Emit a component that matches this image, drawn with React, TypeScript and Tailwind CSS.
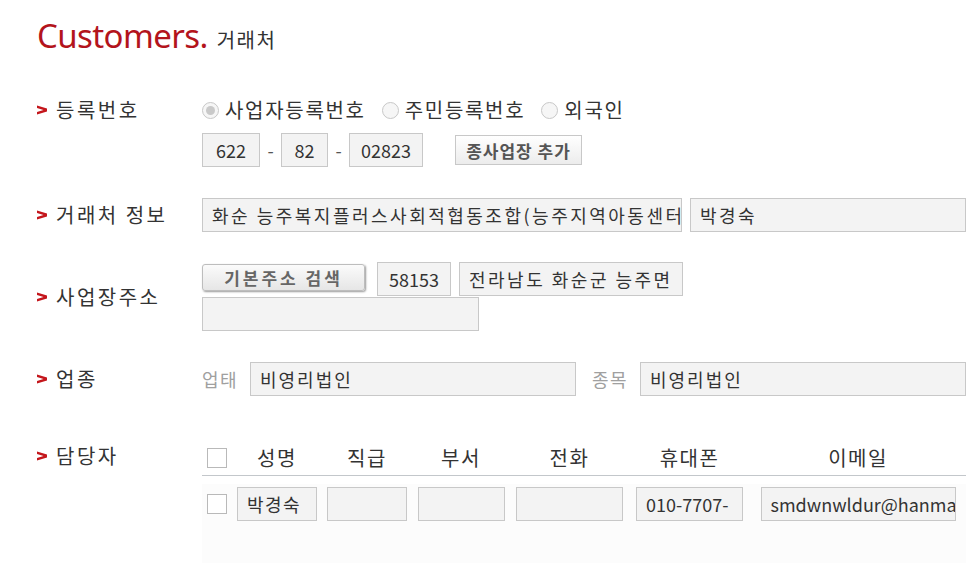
import React from 'react';

const KR = '[font-family:"Noto_Sans_CJK_KR","Noto_Sans",sans-serif]';

function Label({ text }: { text: string }) {
    return (
        <div className="w-[165px] shrink-0 flex items-center gap-[9px]">
            <svg width="10" height="10" viewBox="0 0 10 10" className="shrink-0">
                <path d="M0 0.5 L10 3.6 L10 6.4 L0 9.5 L0 7 L6.5 5 L0 3 Z" fill="#c4161c" />
            </svg>
            <span className="text-[20px] text-[#333] tracking-[2.5px] leading-[28px]">{text}</span>
        </div>
    );
}

function Field({ value = '', className = '' }: { value?: string; className?: string }) {
    return (
        <div className={`h-[34px] bg-[#f3f3f3] border border-[#c8c8c8] text-[18px] text-[#333] leading-[32px] px-[9px] overflow-hidden whitespace-nowrap ${className}`}>
            {value}
        </div>
    );
}

function Radio({ checked, label }: { checked?: boolean; label: string }) {
    return (
        <div className="flex items-center gap-[6px]">
            <span className="w-[17px] h-[17px] rounded-full border border-[#c8c8c8] bg-[#f6f6f6] flex items-center justify-center">
                {checked && <span className="w-[9px] h-[9px] rounded-full bg-[#c9c9c9]" />}
            </span>
            <span className="text-[20px] text-[#333] leading-[28px] tracking-[1.7px]">{label}</span>
        </div>
    );
}

function Check() {
    return <span className="block w-[20px] h-[20px] border border-[#b9b9b9] bg-white" />;
}

export default function App() {
    const heads = ['성명', '직급', '부서', '전화', '휴대폰', '이메일'];
    const cells = [
        { w: 'w-[80px] tracking-[1.5px]', v: '박경숙' },
        { w: 'w-[80px]', v: '' },
        { w: 'w-[87px]', v: '' },
        { w: 'w-[107px]', v: '' },
        { w: 'w-[107px]', v: '010-7707-' },
        { w: 'w-[195px] text-[16px]', v: 'smdwnwldur@hanmail.net' },
    ];

    return (
        <div className={`w-[980px] h-[563px] overflow-hidden bg-white pl-[37px] ${KR}`}>
            {/* 타이틀 */}
            <div className="flex items-baseline gap-[9px] pt-[12px] h-[96px]">
                <span className="text-[33px] text-[#b3141c] tracking-[-0.6px] [font-family:'Noto_Sans',sans-serif] leading-[48px]">Customers.</span>
                <span className="text-[20px] text-[#333] tracking-[1.5px]">거래처</span>
            </div>

            {/* 등록번호 */}
            <div className="flex items-start">
                <Label text="등록번호" />
                <div className="flex flex-col gap-[9px]">
                    <div className="flex items-center gap-[16px] h-[28px]">
                        <Radio checked label="사업자등록번호" />
                        <Radio label="주민등록번호" />
                        <Radio label="외국인" />
                    </div>
                    <div className="flex items-center">
                        <Field value="622" className="w-[58px] text-center px-0" />
                        <span className="w-[21px] text-center text-[#555] text-[18px]">-</span>
                        <Field value="82" className="w-[47px] text-center px-0" />
                        <span className="w-[21px] text-center text-[#555] text-[18px]">-</span>
                        <Field value="02823" className="w-[74px] text-center px-0" />
                        <button className="ml-[32px] w-[127px] h-[30px] border border-[#c8c8c8] bg-gradient-to-b from-white to-[#ececec] text-[17px] font-bold text-[#555] tracking-[1px] leading-none">
                            종사업장 추가
                        </button>
                    </div>
                </div>
            </div>

            {/* 거래처 정보 */}
            <div className="flex items-center mt-[31px]">
                <Label text="거래처 정보" />
                <div className="flex gap-[8px]">
                    <Field value="화순 능주복지플러스사회적협동조합(능주지역아동센터)" className="w-[480px] tracking-[2.5px]" />
                    <Field value="박경숙" className="w-[276px] tracking-[2.5px]" />
                </div>
            </div>

            {/* 사업장주소 */}
            <div className="flex items-center mt-[30px]">
                <Label text="사업장주소" />
                <div className="flex flex-col gap-px">
                    <div className="flex items-start">
                        <button className="mt-[2px] w-[163px] h-[27px] rounded-[3px] border border-[#bdbdbd] bg-gradient-to-b from-[#fbfbfb] to-[#e6e6e6] shadow-[1px_1px_2px_#9a9a9a] text-[17px] font-bold text-[#666] tracking-[3px] leading-none">
                            기본주소 검색
                        </button>
                        <Field value="58153" className="ml-[12px] w-[74px] text-center px-0" />
                        <Field value="전라남도 화순군 능주면" className="ml-[8px] w-[224px] tracking-[2.5px]" />
                    </div>
                    <Field className="w-[277px] h-[33px]" />
                </div>
            </div>

            {/* 업종 */}
            <div className="flex items-center mt-[31px]">
                <Label text="업종" />
                <div className="flex items-center">
                    <span className="text-[18px] text-[#a0a0a0] w-[48px] tracking-[1.5px]">업태</span>
                    <Field value="비영리법인" className="w-[326px] tracking-[2px]" />
                    <span className="ml-[16px] text-[18px] text-[#a0a0a0] w-[48px] tracking-[1.5px]">종목</span>
                    <Field value="비영리법인" className="w-[326px] tracking-[2px]" />
                </div>
            </div>

            {/* 담당자 */}
            <div className="flex items-start mt-[45px]">
                <div className="pt-[1px]">
                    <Label text="담당자" />
                </div>
                <div className="w-[764px]">
                    <div className="grid grid-cols-[30px_90px_90px_98px_119px_121px_216px] items-center h-[35px] border-b border-[#c3c7cb]">
                        <div className="pl-[5px]"><Check /></div>
                        {heads.map((h) => (
                            <div key={h} className="text-center text-[20px] text-[#333] leading-[28px] tracking-[1.5px]">{h}</div>
                        ))}
                    </div>
                    <div className="mt-[8px] bg-[#fcfcfc] h-[100px] pt-[3px]">
                        <div className="grid grid-cols-[30px_90px_90px_98px_119px_121px_216px] items-center">
                            <div className="pl-[5px]"><Check /></div>
                            {cells.map((c, i) => (
                                <div key={i} className="flex justify-center">
                                    <Field value={c.v} className={`h-[33px] px-[9px] text-[17px] ${c.w}`} />
                                </div>
                            ))}
                        </div>
                    </div>
                </div>
            </div>
        </div>
    );
}
